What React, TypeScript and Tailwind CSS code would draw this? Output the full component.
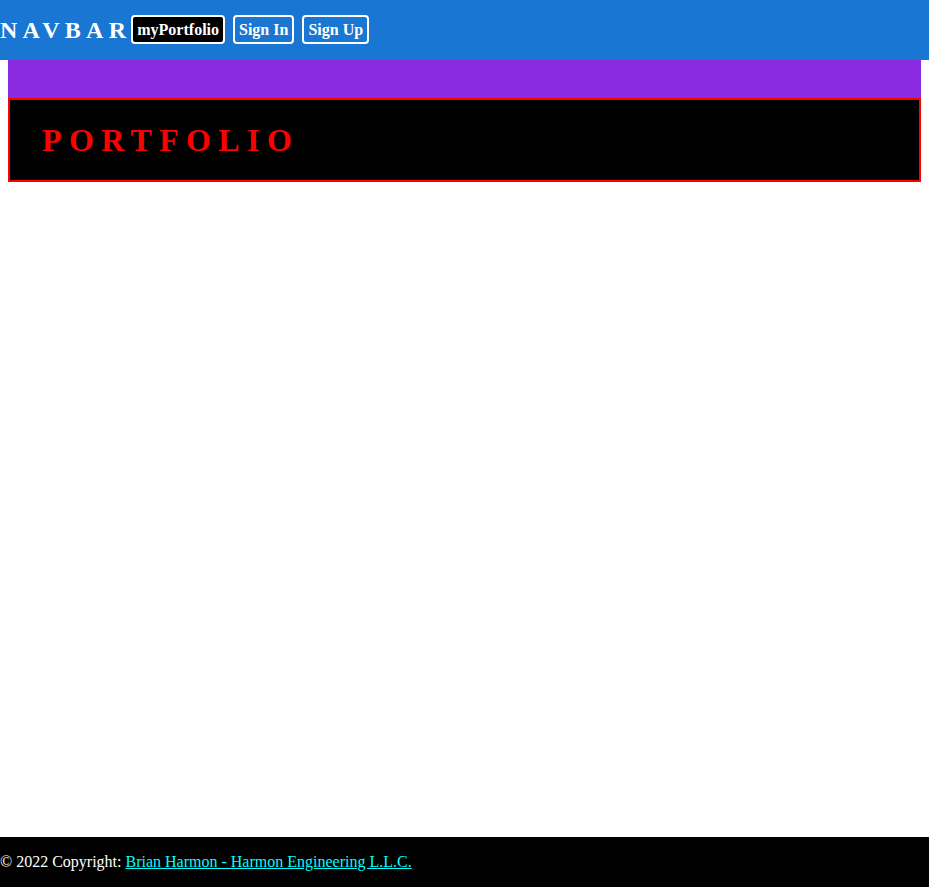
import React from 'react';

const serif = { fontFamily: '"Liberation Serif", "Times New Roman", serif' };

export default function App() {
  return (
    <div className="flex flex-col min-h-screen bg-white" style={serif}>
      {/* Navbar */}
      <nav className="flex-none h-[60px] flex items-center bg-[#1976d2]">
        <span className="text-[24px] font-bold text-white tracking-[0.22em] leading-none">NAVBAR</span>
        <div className="flex items-center gap-2 -mt-[2px]">
          <button className="px-[4px] py-[3px] bg-black text-white text-[16px] font-bold border-2 border-white rounded-[4px] leading-[19px]">
            myPortfolio
          </button>
          <button className="px-[4px] py-[3px] bg-transparent text-white text-[16px] font-bold border-2 border-white rounded-[4px] leading-[19px]">
            Sign In
          </button>
          <button className="px-[4px] py-[3px] bg-transparent text-white text-[16px] font-bold border-2 border-white rounded-[4px] leading-[19px]">
            Sign Up
          </button>
        </div>
      </nav>

      {/* Main */}
      <main className="flex-1 px-2">
        <div className="h-[38px] bg-[#8a2be2]" />
        <div className="h-[84px] flex items-center bg-black border-2 border-[#ff0000] pl-[32px]">
          <h1 className="text-[32px] font-bold text-[#ff0000] tracking-[0.23em] leading-none">PORTFOLIO</h1>
        </div>
      </main>

      {/* Footer */}
      <footer className="flex-none h-[50px] flex items-center bg-black text-white text-[16px]">
        <span>
          © 2022 Copyright:{' '}
          <a href="#" className="text-[#00ffff] underline">
            Brian Harmon - Harmon Engineering L.L.C.
          </a>
        </span>
      </footer>
    </div>
  );
}
